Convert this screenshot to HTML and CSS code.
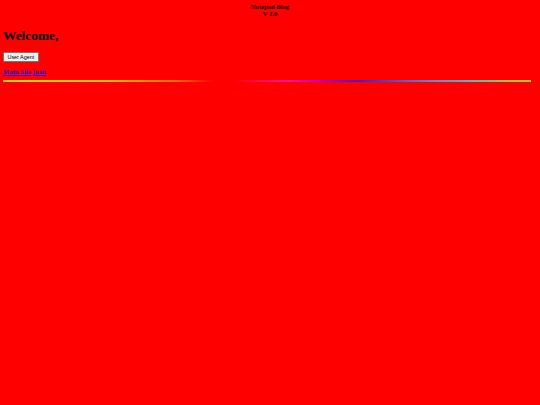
FILE: index.html
```html
<!DOCTYPE html>
<html>
<head>
<meta charset="utf-8">
<title>Notepad Blog</title>
<link rel="stylesheet" href="styles.css">
</head>
<body>
<div class="brand">Notepad Blog<br>V 2.0</div>
<h1 class="welcome">Welcome,</h1>
<div class="actions"><button class="ua-btn" type="button">User Agent</button></div>
<nav class="links"><a href="#">Main Site</a> <a href="#">juan</a></nav>
<div class="rainbow"></div>
</body>
</html>
```

FILE: styles.css
```css
html, body {
  background: #ff0000;
}
body {
  margin: 3px 3px;
  font-family: "Liberation Serif", "Times New Roman", serif;
  color: #000;
}
.brand {
  text-align: center;
  font-weight: bold;
  font-size: 6.6px;
  line-height: 7.4px;
}
.welcome {
  margin: 10px 0 0;
  font-size: 13.4px;
  line-height: 15px;
  font-weight: bold;
}
.actions {
  margin-top: 9.5px;
  display: flex;
}
.ua-btn {
  font-family: "Liberation Sans", Arial, sans-serif;
  font-size: 5.4px;
  line-height: 6px;
  padding: 1px 3.5px 0.5px;
  border: 1px solid #767676;
  border-radius: 1px;
  background: #efefef;
  color: #000;
  margin: 0;
}
.links {
  margin-top: 6px;
  font-weight: bold;
  font-size: 6.8px;
  line-height: 8px;
}
.links a {
  color: #2200cc;
  text-decoration: none;
  border-bottom: 1px solid #2200cc;
}
.rainbow {
  margin-top: 4px;
  height: 2px;
  width: 528px;
  background: linear-gradient(to right,
    #9acd32 0%,
    #ffd700 4%,
    #ffc400 20%,
    #ff6a00 33%,
    #ff0000 40%,
    #ff0000 43%,
    #ff1493 53%,
    #c000c8 60%,
    #5010d0 67%,
    #4848d8 73%,
    #5a8ad8 81%,
    #48c0c0 89%,
    #9acd32 97%,
    #9acd32 100%);
}
```
